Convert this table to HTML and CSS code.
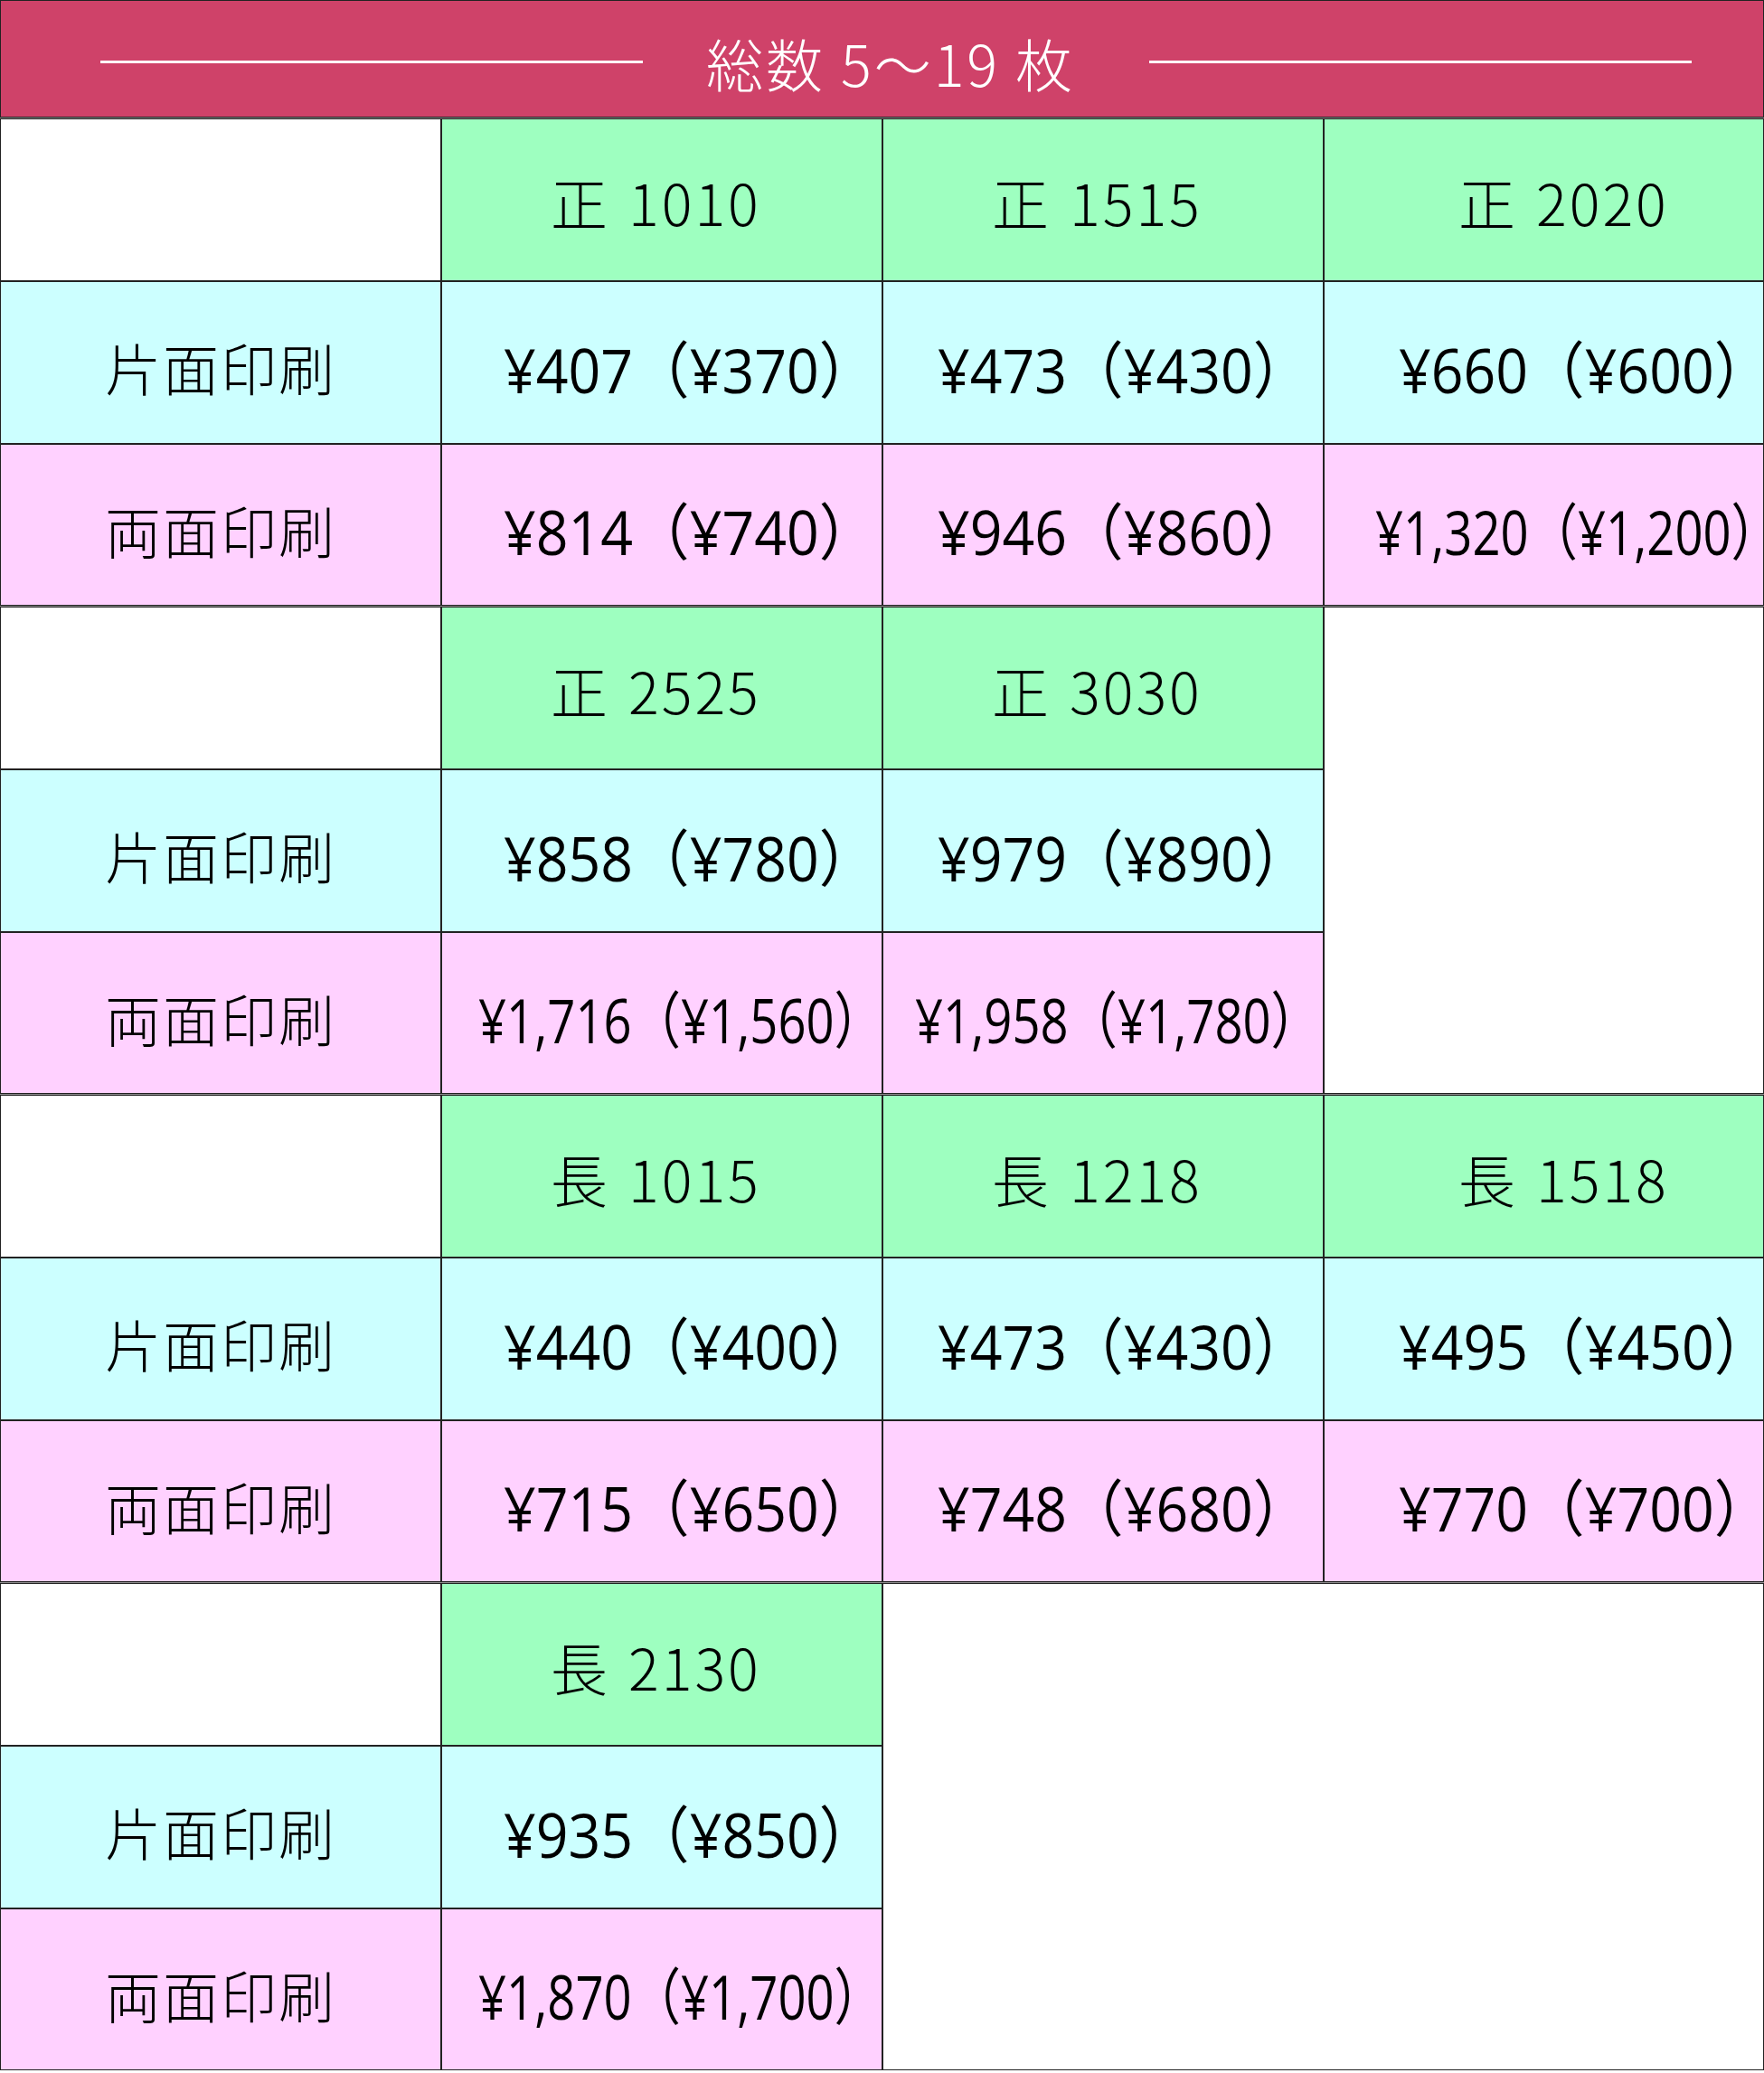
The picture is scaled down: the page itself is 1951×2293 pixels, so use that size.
FILE: index.html
```html
<!DOCTYPE html>
<html lang="ja">
<head>
<meta charset="utf-8">
<title>総数 5〜19 枚</title>
<link rel="stylesheet" href="styles.css">
</head>
<body>
<div class="table">
  <div class="title">
    <span class="rule"></span>
    <span class="title-text">総数 5〜19 枚</span>
    <span class="rule"></span>
  </div>

  <div class="sec">
    <div class="cell blank"></div>
    <div class="cell size c2"><span class="k">正</span>1010</div>
    <div class="cell size c3"><span class="k">正</span>1515</div>
    <div class="cell size c4"><span class="k">正</span>2020</div>
    <div class="cell label one">片面印刷</div>
    <div class="cell price one c2"><span class="p">¥407（¥370<span class="r">）</span></span></div>
    <div class="cell price one c3"><span class="p">¥473（¥430<span class="r">）</span></span></div>
    <div class="cell price one c4"><span class="p">¥660（¥600<span class="r">）</span></span></div>
    <div class="cell label two">両面印刷</div>
    <div class="cell price two c2"><span class="p">¥814（¥740<span class="r">）</span></span></div>
    <div class="cell price two c3"><span class="p">¥946（¥860<span class="r">）</span></span></div>
    <div class="cell price two c4 long"><span class="p">¥1,320（¥1,200<span class="r">）</span></span></div>
  </div>

  <div class="sec">
    <div class="cell blank"></div>
    <div class="cell size c2"><span class="k">正</span>2525</div>
    <div class="cell size c3"><span class="k">正</span>3030</div>
    <div class="cell empty col4"></div>
    <div class="cell label one">片面印刷</div>
    <div class="cell price one c2"><span class="p">¥858（¥780<span class="r">）</span></span></div>
    <div class="cell price one c3"><span class="p">¥979（¥890<span class="r">）</span></span></div>
    <div class="cell label two">両面印刷</div>
    <div class="cell price two c2 long"><span class="p">¥1,716（¥1,560<span class="r">）</span></span></div>
    <div class="cell price two c3 long"><span class="p">¥1,958（¥1,780<span class="r">）</span></span></div>
  </div>

  <div class="sec">
    <div class="cell blank"></div>
    <div class="cell size c2"><span class="k">長</span>1015</div>
    <div class="cell size c3"><span class="k">長</span>1218</div>
    <div class="cell size c4"><span class="k">長</span>1518</div>
    <div class="cell label one">片面印刷</div>
    <div class="cell price one c2"><span class="p">¥440（¥400<span class="r">）</span></span></div>
    <div class="cell price one c3"><span class="p">¥473（¥430<span class="r">）</span></span></div>
    <div class="cell price one c4"><span class="p">¥495（¥450<span class="r">）</span></span></div>
    <div class="cell label two">両面印刷</div>
    <div class="cell price two c2"><span class="p">¥715（¥650<span class="r">）</span></span></div>
    <div class="cell price two c3"><span class="p">¥748（¥680<span class="r">）</span></span></div>
    <div class="cell price two c4"><span class="p">¥770（¥700<span class="r">）</span></span></div>
  </div>

  <div class="sec">
    <div class="cell blank"></div>
    <div class="cell size c2"><span class="k">長</span>2130</div>
    <div class="cell empty col34"></div>
    <div class="cell label one">片面印刷</div>
    <div class="cell price one c2"><span class="p">¥935（¥850<span class="r">）</span></span></div>
    <div class="cell label two">両面印刷</div>
    <div class="cell price two c2 long"><span class="p">¥1,870（¥1,700<span class="r">）</span></span></div>
  </div>
</div>
</body>
</html>
```

FILE: styles.css
```css
html, body {
  margin: 0;
  padding: 0;
  background: #ffffff;
}

.table {
  width: 1951px;
  display: flex;
  flex-direction: column;
  gap: 1px;
  background: #8a8a8a;
}

.title {
  height: 128px;
  background: #cf4269;
  border: 1px solid #222222;
  display: grid;
  grid-template-columns: 600px 560px 600px;
  align-items: center;
  padding-left: 110px;
}

.rule {
  height: 3px;
  background: #ffffff;
  margin-top: 6px;
}

.title-text {
  color: #ffffff;
  font-family: "Noto Sans CJK JP", sans-serif;
  font-weight: 300;
  font-size: 63px;
  line-height: 1;
  padding-top: 6px;
  letter-spacing: 3px;
  text-align: center;
  padding-right: 12px;
}

.sec {
  display: grid;
  grid-template-columns: 486px 486px 486px 485px;
  grid-template-rows: 178px 178px 177px;
  gap: 2px;
  background: #222222;
  border: 1px solid #222222;
}

.cell {
  display: flex;
  align-items: center;
  justify-content: center;
  color: #000000;
  font-family: "Noto Sans CJK JP", sans-serif;
  white-space: nowrap;
  min-width: 0;
}

.blank, .empty {
  background: #ffffff;
}

.col4 {
  grid-column: 4;
  grid-row: 1 / 4;
}

.col34 {
  grid-column: 3 / 5;
  grid-row: 1 / 4;
}

.size {
  background: #9effc0;
  font-size: 63px;
  font-weight: 300;
  padding-top: 2px;
  justify-content: flex-start;
  letter-spacing: 3px;
}

.size .k {
  margin-right: 20px;
}

.size.c2, .size.c3 {
  padding-left: 120px;
}

.size.c4 {
  padding-left: 148px;
}

.label {
  font-size: 62px;
  font-weight: 300;
  letter-spacing: 2px;
  padding-top: 10px;
}

.one {
  background: #ccffff;
}

.two {
  background: #ffd1ff;
}

.price {
  font-family: "Open Sans", "Noto Sans CJK JP", sans-serif;
  font-size: 68px;
  padding-top: 8px;
  justify-content: flex-start;
}

.price .p {
  display: inline-block;
  flex: none;
  transform: scaleX(0.92);
  transform-origin: left center;
  margin-right: -36px;
}

.price .r {
  letter-spacing: -0.45em;
}

.price.long .p {
  transform: scaleX(0.8);
  margin-right: -90px;
}

.price.c2 {
  padding-left: 68px;
}

.price.c3 {
  padding-left: 60px;
}

.price.c4 {
  padding-left: 82px;
}

.price.long.c2 {
  padding-left: 40px;
}

.price.long.c3 {
  padding-left: 35px;
}

.price.long.c4 {
  padding-left: 56px;
}
```
